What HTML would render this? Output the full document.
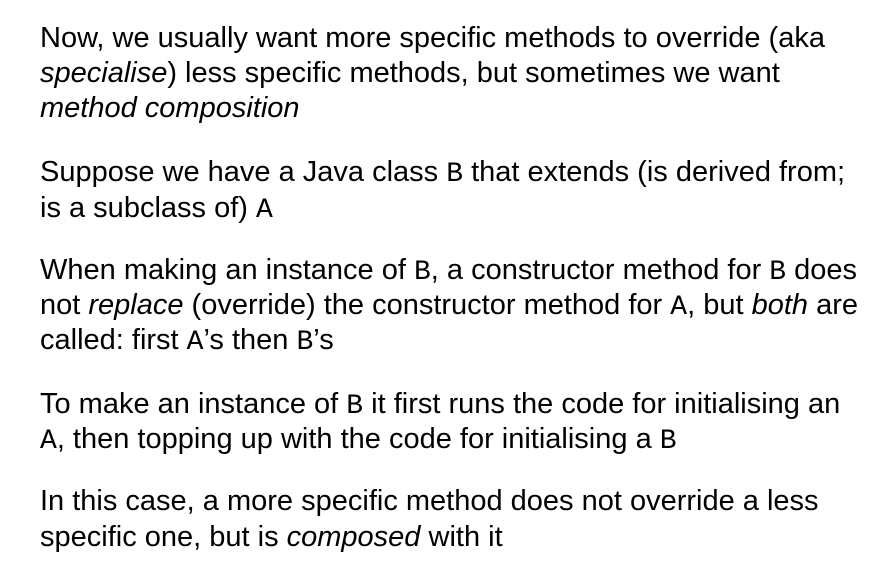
<!DOCTYPE html>
<html><head><meta charset="utf-8"><style>
body{margin:0;background:#fff;width:880px;height:573px;overflow:hidden;position:relative;font-family:"Liberation Sans",Arial,sans-serif;font-size:29px;color:#000}
.l{position:absolute;left:40px;white-space:nowrap;line-height:36px}
code{font-family:"Liberation Mono","DejaVu Sans Mono",monospace;font-size:28px}
</style></head><body>
<div class="l" style="top:20px">Now, we usually want more specific methods to override (aka</div>
<div class="l" style="top:55px"><i>specialise</i>) less specific methods, but sometimes we want</div>
<div class="l" style="top:90px"><i>method composition</i></div>
<div class="l" style="top:154px">Suppose we have a Java class <code>B</code> that extends (is derived from;</div>
<div class="l" style="top:190px">is a subclass of) <code>A</code></div>
<div class="l" style="top:252px">When making an instance of <code>B</code>, a constructor method for <code>B</code> does</div>
<div class="l" style="top:287px">not <i>replace</i> (override) the constructor method for <code>A</code>, but <i>both</i> are</div>
<div class="l" style="top:322px">called: first <code>A</code>’s then <code>B</code>’s</div>
<div class="l" style="top:386px">To make an instance of <code>B</code> it first runs the code for initialising an</div>
<div class="l" style="top:421px"><code>A</code>, then topping up with the code for initialising a <code>B</code></div>
<div class="l" style="top:483px">In this case, a more specific method does not override a less</div>
<div class="l" style="top:519px">specific one, but is <i>composed</i> with it</div>
</body></html>
